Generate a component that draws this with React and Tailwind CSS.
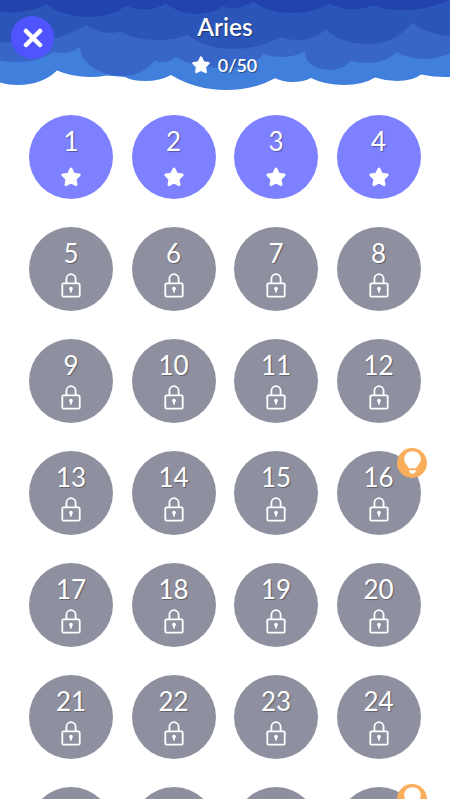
import { useState } from 'react';

const TOTAL_LEVELS = 50;
const UNLOCKED_LEVELS = 4;
const VISIBLE_LEVELS = 28;
const HINT_LEVELS = [16, 28];

const StarIcon = ({ className }) => (
  <svg viewBox="0 0 24 24" className={className}>
    <path
      d="M12 3.2 14.8 8.9 21 9.8 16.5 14.2 17.6 20.4 12 17.5 6.4 20.4 7.5 14.2 3 9.8 9.2 8.9Z"
      fill="white"
      stroke="white"
      strokeWidth="3"
      strokeLinejoin="round"
    />
  </svg>
);

const LockIcon = ({ className }) => (
  <svg viewBox="0 0 20 25" className={className} fill="none" stroke="white" strokeWidth="1.8">
    <rect x="1.3" y="10.3" width="17.4" height="13.3" rx="1.2" />
    <path d="M5.4 10.3V5.8a4.6 4.6 0 0 1 9.2 0v4.5" />
    <circle cx="10" cy="15.6" r="1.9" fill="white" stroke="none" />
    <path d="M10 16v3.6" strokeWidth="1.7" />
  </svg>
);

const HintBadge = () => (
  <div className="absolute left-[60px] -top-[3px] size-[30px] rounded-full bg-[#f9ae5c]">
    <svg viewBox="0 0 30 30" className="size-[30px]" fill="white">
      <path d="M15.5 3.2c-4.8 0-8.3 3.5-8.3 8 0 4.3 3.3 5.300 4.500 9.100h7.600c1.200-3.800 4.500-4.800 4.500-9.100 0-4.500-3.500-8-8.300-8z" />
      <path d="M12.2 22.3h6.6c0 2.1-1.3 3.400-3.300 3.400s-3.300-1.300-3.300-3.400z" />
    </svg>
  </div>
);

// Layers go from the lightest at the back to the darkest in front
const Clouds = () => (
  <svg viewBox="0 0 450 95" className="block h-[95px] w-[450px]">
    <path
      fill="#417fdc"
      d="M0 0H450V77Q435 77.5 421 74.5Q413 81 397 81Q386 81 375 77.5Q363 85 344 85Q325 85 311 78Q304 82 292 82Q283 82 275 78.3Q254 90 226 90Q196 90 171 75Q160 81 145 81Q132 81 125 77L107 75.5Q98 77 90 77Q72 77 57 70.5Q42 85 18 85Q8 85 0 82.5Z"
    />
    <path
      fill="#3866c8"
      d="M0 0H450V53Q438 59 425 59Q407 59 397 52Q385 63 368 63Q359 63 351 61Q342 70 330 70Q304 68 305 51Q295 57 282 57Q271 57 264 54Q252 68 225 68Q194 68 176 57Q170 62 164 62Q158 62 155 60Q143 76 122 76C100 76 80 63 80 47Q72 53 63 53Q58 53 54 52Q39 62 17 62Q8 62 0 60.5Z"
    />
    <path
      fill="#2b55b8"
      d="M0 0H450V36Q428 35 412 22.5Q395 44 368 44Q340 44 326 29Q315 40 298 40Q288 40 280 37Q260 49 231 49Q204 48 188 35Q173 40 157 40Q135 40 120 31.5Q114 33 107 33Q96 32 86 25Q57 43 17 43Q8 43 0 42Z"
    />
    <path
      fill="#2143ab"
      d="M0 0H450Q428 10 402 10Q385 10 373 5.5Q365 9 352 9.5Q339 9 330 3.5Q313 13 290 13Q265 12 254 1.5Q242 8 233 8Q228 8 223 6.5Q210 14 194 14Q177 13 166 3Q157 9 146 9.5Q136 10 126 6Q111 17 87 17Q60 15 46 4Q31 12 10 12.5L0 12Z"
    />
  </svg>
);

const LevelButton = ({ level }) => {
  const unlocked = level <= UNLOCKED_LEVELS;

  return (
    <button
      className={`relative flex size-[84px] flex-col items-center rounded-full ${
        unlocked ? 'bg-[#7d80ff]' : 'bg-[#8e90a0]'
      }`}
    >
      <span className="mt-[17px] h-[18px] text-[26px] leading-[18px] text-white [text-shadow:1px_1px_1px_rgba(0,0,0,0.35)]">
        {level}
      </span>
      {unlocked ? (
        <StarIcon className="mt-4 size-[22px]" />
      ) : (
        <LockIcon className="mt-[11px] h-[25px] w-5" />
      )}
      {HINT_LEVELS.includes(level) && <HintBadge />}
    </button>
  );
};

const App = () => {
  const [stars] = useState(0);
  const levels = Array.from({ length: VISIBLE_LEVELS }, (_, i) => i + 1);

  return (
    <div className="h-[799px] w-[450px] overflow-hidden bg-white font-['Lato','Liberation_Sans',sans-serif]">
      <header className="relative h-[95px]">
        <Clouds />
        <button
          aria-label="Close"
          className="absolute left-[11px] top-4 flex size-[43px] items-center justify-center rounded-full bg-[#5054ff]"
        >
          <svg viewBox="0 0 20 20" className="size-5" stroke="white" strokeWidth="4.5" strokeLinecap="round">
            <path d="M3 3 17 17M17 3 3 17" />
          </svg>
        </button>
        <div className="absolute inset-x-0 top-3 flex flex-col items-center text-white">
          <h1 className="text-[24.5px] font-semibold leading-[30px] [text-shadow:1px_1px_1px_rgba(0,0,0,0.4)]">
            Aries
          </h1>
          <div className="mt-[11px] mr-[2px] flex items-center gap-[7px]">
            <StarIcon className="size-5" />
            <span className="text-[18px] font-semibold leading-6 [text-shadow:1px_1px_1px_rgba(0,0,0,0.4)]">
              {stars}/{TOTAL_LEVELS}
            </span>
          </div>
        </div>
      </header>

      <main className="grid grid-cols-[repeat(4,84px)] gap-x-[18.5px] gap-y-[28px] pl-[29px] pt-5">
        {levels.map((level) => (
          <LevelButton key={level} level={level} />
        ))}
      </main>
    </div>
  );
};

export default App;
